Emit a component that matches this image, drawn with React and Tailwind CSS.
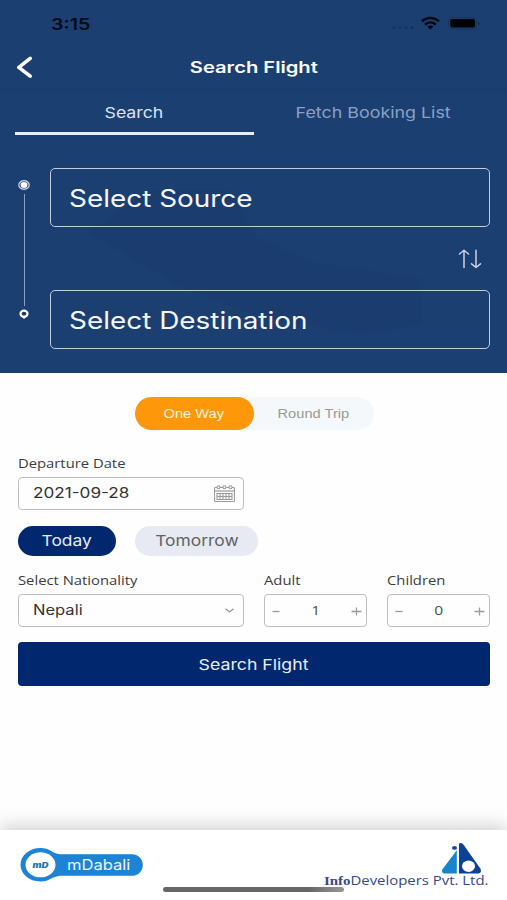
import React, { useState } from 'react';

const StatusBar = () => (
    <div className="h-[42px] pl-[51px] pr-[26px] pt-[14px] flex justify-between">
        <span className="origin-left scale-x-[1.23] text-base leading-5 font-semibold text-[#050b16]">3:15</span>
        <svg width="90" height="20" viewBox="0 0 90 20" className="shrink-0">
            <g fill="#142f59">
                <circle cx="3" cy="13.5" r="1.3" />
                <circle cx="9" cy="13.5" r="1.3" />
                <circle cx="15" cy="13.5" r="1.3" />
                <circle cx="21" cy="13.5" r="1.3" />
            </g>
            <g fill="none" stroke="#03070f" strokeWidth="2.5">
                <path d="M30.8 7.4c4.9-4.4 12.3-4.4 17.2 0" />
                <path d="M34 10.6c3.2-2.7 7.6-2.7 10.8 0" />
            </g>
            <path d="M36.4 12.5c1.7-1.4 4.3-1.4 6 0l-3 2.9z" fill="#03070f" />
            <rect x="57.5" y="3.5" width="28" height="11.5" rx="3.5" fill="none" stroke="#17345f" />
            <rect x="59.2" y="5" width="24.8" height="8.5" rx="2" fill="#010306" />
            <path d="M87.5 7.5c1.8.6 1.8 3.2 0 3.8z" fill="#132c52" />
        </svg>
    </div>
);

const TitleBar = () => (
    <div className="relative h-12 pt-0.5 flex items-center justify-center border-b border-[#1a3b6a]">
        <button type="button" className="absolute left-4 top-[14px]">
            <svg width="18" height="24" viewBox="0 0 18 24" fill="none" stroke="#fff" strokeWidth="3.6" strokeLinecap="round" strokeLinejoin="round">
                <path d="M14.2 2.4L2.8 11.3l11.4 8.9" />
            </svg>
        </button>
        <h1 className="scale-x-[1.26] text-base font-semibold text-white">Search Flight</h1>
    </div>
);

const RouteLine = () => (
    <svg width="14" height="142" viewBox="0 0 14 142" fill="none" className="shrink-0">
        <ellipse cx="7" cy="6" rx="5.2" ry="4.3" stroke="#d5def0" strokeWidth="1.2" />
        <ellipse cx="7" cy="6" rx="3.5" ry="2.9" fill="#fff" />
        <path d="M7.5 15v112" stroke="#8ca0c3" />
        <path d="M4.5 137.5h5L7 140z" fill="#fff" />
        <ellipse cx="7" cy="134.7" rx="3.5" ry="3" stroke="#fff" strokeWidth="2.2" />
    </svg>
);

const PlaceField = ({ label }) => (
    <button type="button" className="w-full h-[59px] pt-[3px] pl-[18px] flex items-center rounded-[5px] border-[1.5px] border-[#c3cbdd]">
        <span className="origin-left scale-x-[1.163] text-2xl text-[#f4f6fc]">{label}</span>
    </button>
);

const Label = ({ children }) => (
    <label className="block h-4 w-max origin-left scale-x-[1.233] font-['Open_Sans','Noto_Sans',sans-serif] text-xs leading-[17px] text-[#3c3c3c]">{children}</label>
);

const Counter = ({ label, value, onChange }) => (
    <div className="w-[103px] shrink-0">
        <Label>{label}</Label>
        <div className="mt-1.5 h-[33px] px-[7px] flex items-center justify-between rounded border-[1.5px] border-[#bdbdbd]">
            <button type="button" onClick={() => onChange(Math.max(0, value - 1))}>
                <svg width="8" height="10" viewBox="0 0 8 10" stroke="#9b9b9b" strokeWidth="1.3"><path d="M0.5 5.5h7" /></svg>
            </button>
            <span className="scale-x-[1.2] font-['Open_Sans',sans-serif] text-[13px] text-[#4c4c4c]">{value}</span>
            <button type="button" onClick={() => onChange(value + 1)} className="-mr-[3px]">
                <svg width="11" height="10" viewBox="0 0 11 10" stroke="#9b9b9b" strokeWidth="1.3"><path d="M0.5 5.5h10M5.5 1.5v8" /></svg>
            </button>
        </div>
    </div>
);

const CalendarIcon = () => (
    <svg width="21" height="18" viewBox="0 0 21 18" fill="none" stroke="#9a9a9a" strokeWidth="1.1">
        <path d="M3 2.5H1.5q-1 0-1 1v12q0 1 1 1h18q1 0 1-1v-12q0-1-1-1H18M6 2.5h3M12 2.5h3" />
        <circle cx="4.5" cy="2.3" r="1.5" />
        <circle cx="10.5" cy="2.3" r="1.5" />
        <circle cx="16.5" cy="2.3" r="1.5" />
        <path d="M.5 6h20" strokeWidth="1.2" />
        <path d="M3 8.5h15v6H3zM3 11.5h15M6 8v7M9 8v7M12 8v7M15 8v7" />
    </svg>
);

const Footer = () => (
    <footer className="relative h-[70px] pt-[12px] pl-5 pr-[19px] flex justify-between shadow-[0_-3px_18px_rgba(0,0,0,0.2)] bg-white">
        <div className="relative h-[50px] w-[123px] pt-[13px] pl-[47px]">
            <svg width="124" height="36" viewBox="0 0 124 36" className="absolute left-0 top-[5px]">
                <path d="M20.5 1C30 1 32 6.5 40 7.2h72a10.8 10.8 0 0 1 0 21.6H40C32 29.5 30 34.5 20.5 34.5 9 34.5.5 27 .5 17.8S9 1 20.5 1z" fill="#1d83d4" />
                <ellipse cx="20.5" cy="17.8" rx="15" ry="12.5" fill="#fff" />
                <text x="12.5" y="20.6" fill="#1d74b8" fontSize="7.5" fontWeight="900" fontStyle="italic" textLength="16" lengthAdjust="spacingAndGlyphs">mD</text>
            </svg>
            <span className="relative block w-max origin-left scale-x-[1.14] text-[14.5px] leading-5 text-[#eaf4ff]">mDabali</span>
        </div>
        <div className="flex w-[164px] flex-col items-end">
            <svg width="41" height="32" viewBox="0 0 41 31" preserveAspectRatio="none" className="mr-1.5 shrink-0">
                <path d="M15.8 8v22.5H3Q0 30 1.5 26.5z" fill="#1784cc" />
                <path d="M18 1.5Q19.5 0 22 2L39.5 26Q41 30 37.5 30.5H18z" fill="#0b4295" />
                <ellipse cx="13.5" cy="5.7" rx="2.5" ry="1.9" fill="#0c4b99" />
                <ellipse cx="27.5" cy="23.5" rx="6.5" ry="5.5" fill="#fff" />
            </svg>
            <div className="w-max origin-right scale-x-[1.147] -mt-0.5 font-['Open_Sans',sans-serif] text-[13px] leading-4 text-[#35488b]">
                <span className="font-['Liberation_Serif',serif] font-bold">Info</span>Developers Pvt. Ltd.
            </div>
        </div>
        <div className="absolute left-[163px] top-[57px] h-[5px] w-[181px] rounded-full bg-linear-to-r from-[#666] from-80% to-[#999]" />
    </footer>
);

const App = () => {
    const [tab, setTab] = useState('search');
    const [trip, setTrip] = useState('one');
    const [adult, setAdult] = useState(1);
    const [children, setChildren] = useState(0);

    return (
        <div className="w-[507px] h-[900px] overflow-hidden flex flex-col bg-[#fefefe] font-[Inter,sans-serif]">
            <header className="relative isolate h-[373px] shrink-0 bg-[#1c3f71]">
                <svg width="507" height="373" className="absolute inset-0 -z-10">
                    <path d="M88 232L150 190 230 190 255 236 310 262 420 278 422 325 360 335 255 315 175 284 145 266z" fill="#1b3b6b" opacity="0.55" />
                </svg>
                <StatusBar />
                <TitleBar />
                <div className="h-[45px] px-[15px] flex">
                    <button
                        type="button"
                        onClick={() => setTab('search')}
                        className={`w-[239px] pt-1 flex items-center justify-center border-b-[3px] text-[15px] ${tab === 'search' ? 'border-[#e8edfa] text-[#dbe3f4]' : 'border-transparent text-[#8ba0c5]'}`}
                    >
                        <span className="scale-x-[1.18]">Search</span>
                    </button>
                    <button
                        type="button"
                        onClick={() => setTab('list')}
                        className={`w-[239px] pt-1 flex items-center justify-center border-b-[3px] text-[15px] ${tab === 'list' ? 'border-[#e8edfa] text-[#dbe3f4]' : 'border-transparent text-[#8ba0c5]'}`}
                    >
                        <span className="scale-x-[1.19]">Fetch Booking List</span>
                    </button>
                </div>
                <div className="pt-[33px] pl-[17px] pr-[17px] flex">
                    <div className="pt-[11px]"><RouteLine /></div>
                    <div className="ml-[19px] flex-1">
                        <PlaceField label="Select Source" />
                        <div className="h-[63px] pr-2 flex items-center justify-end">
                            <svg width="24" height="20" viewBox="0 0 24 20" fill="none" stroke="#c9d3e8" strokeWidth="1.5" strokeLinecap="round" strokeLinejoin="round">
                                <path d="M6 18.5V1.5M1.5 5L6 1.2l4.5 3.8M18 1.2v17M13.5 14.8l4.5 3.7 4.5-3.7" />
                            </svg>
                        </div>
                        <PlaceField label="Select Destination" />
                    </div>
                </div>
            </header>

            <main className="flex-1 pl-[18px] pr-[17px] pt-6">
                <div className="ml-[117px] w-[239px] h-[33px] flex rounded-full bg-[#f4f8fa] text-xs font-[Liberation_Sans,sans-serif]">
                    <button type="button" onClick={() => setTrip('one')} className={`w-[119px] pr-0.5 rounded-full ${trip === 'one' ? 'bg-[#ff970b] text-[#fff2df]' : 'text-[#999]'}`}>
                        <span className="inline-block scale-x-[1.22]">One Way</span>
                    </button>
                    <button type="button" onClick={() => setTrip('round')} className={`w-[120px] pr-0.5 rounded-full ${trip === 'round' ? 'bg-[#ff970b] text-[#fff2df]' : 'text-[#999]'}`}>
                        <span className="inline-block scale-x-[1.22]">Round Trip</span>
                    </button>
                </div>

                <div className="mt-[25px]">
                    <Label>Departure Date</Label>
                    <div className="mt-1.5 w-[226px] h-[33px] pl-3.5 pr-2 flex items-center justify-between rounded border-[1.5px] border-[#bdbdbd]">
                        <span className="-mt-0.5 origin-left scale-x-[1.225] text-sm text-[#333]">2021-09-28</span>
                        <CalendarIcon />
                    </div>
                </div>

                <div className="mt-4 flex gap-[19px] text-[15px]">
                    <button type="button" className="w-[98px] h-[30px] rounded-full bg-[#01286e] text-[#e4e9f5]">
                        <span className="inline-block scale-x-[1.16]">Today</span>
                    </button>
                    <button type="button" className="w-[123px] h-[30px] rounded-full bg-[#e7eaf3] text-[#626262]">
                        <span className="inline-block scale-x-[1.16]">Tomorrow</span>
                    </button>
                </div>

                <div className="mt-4 flex">
                    <div className="w-[226px] mr-5 shrink-0">
                        <Label>Select Nationality</Label>
                        <div className="mt-1.5 h-[33px] pl-3.5 pr-[9px] flex items-center justify-between rounded border-[1.5px] border-[#bdbdbd]">
                            <span className="-mt-0.5 origin-left scale-x-[1.18] text-sm text-[#333]">Nepali</span>
                            <svg width="9" height="5" viewBox="0 0 9 5" fill="none" stroke="#949494" strokeWidth="1.2"><path d="M.5.7l4 3.3 4-3.3" /></svg>
                        </div>
                    </div>
                    <Counter label="Adult" value={adult} onChange={setAdult} />
                    <div className="ml-5">
                        <Counter label="Children" value={children} onChange={setChildren} />
                    </div>
                </div>

                <button type="button" className="mt-[15px] w-[472px] h-11 pt-0.5 rounded bg-[#01286e] text-[15px] text-[#e8edfa]">
                    <span className="inline-block scale-x-[1.18]">Search Flight</span>
                </button>
            </main>

            <Footer />
        </div>
    );
};

export default App;
